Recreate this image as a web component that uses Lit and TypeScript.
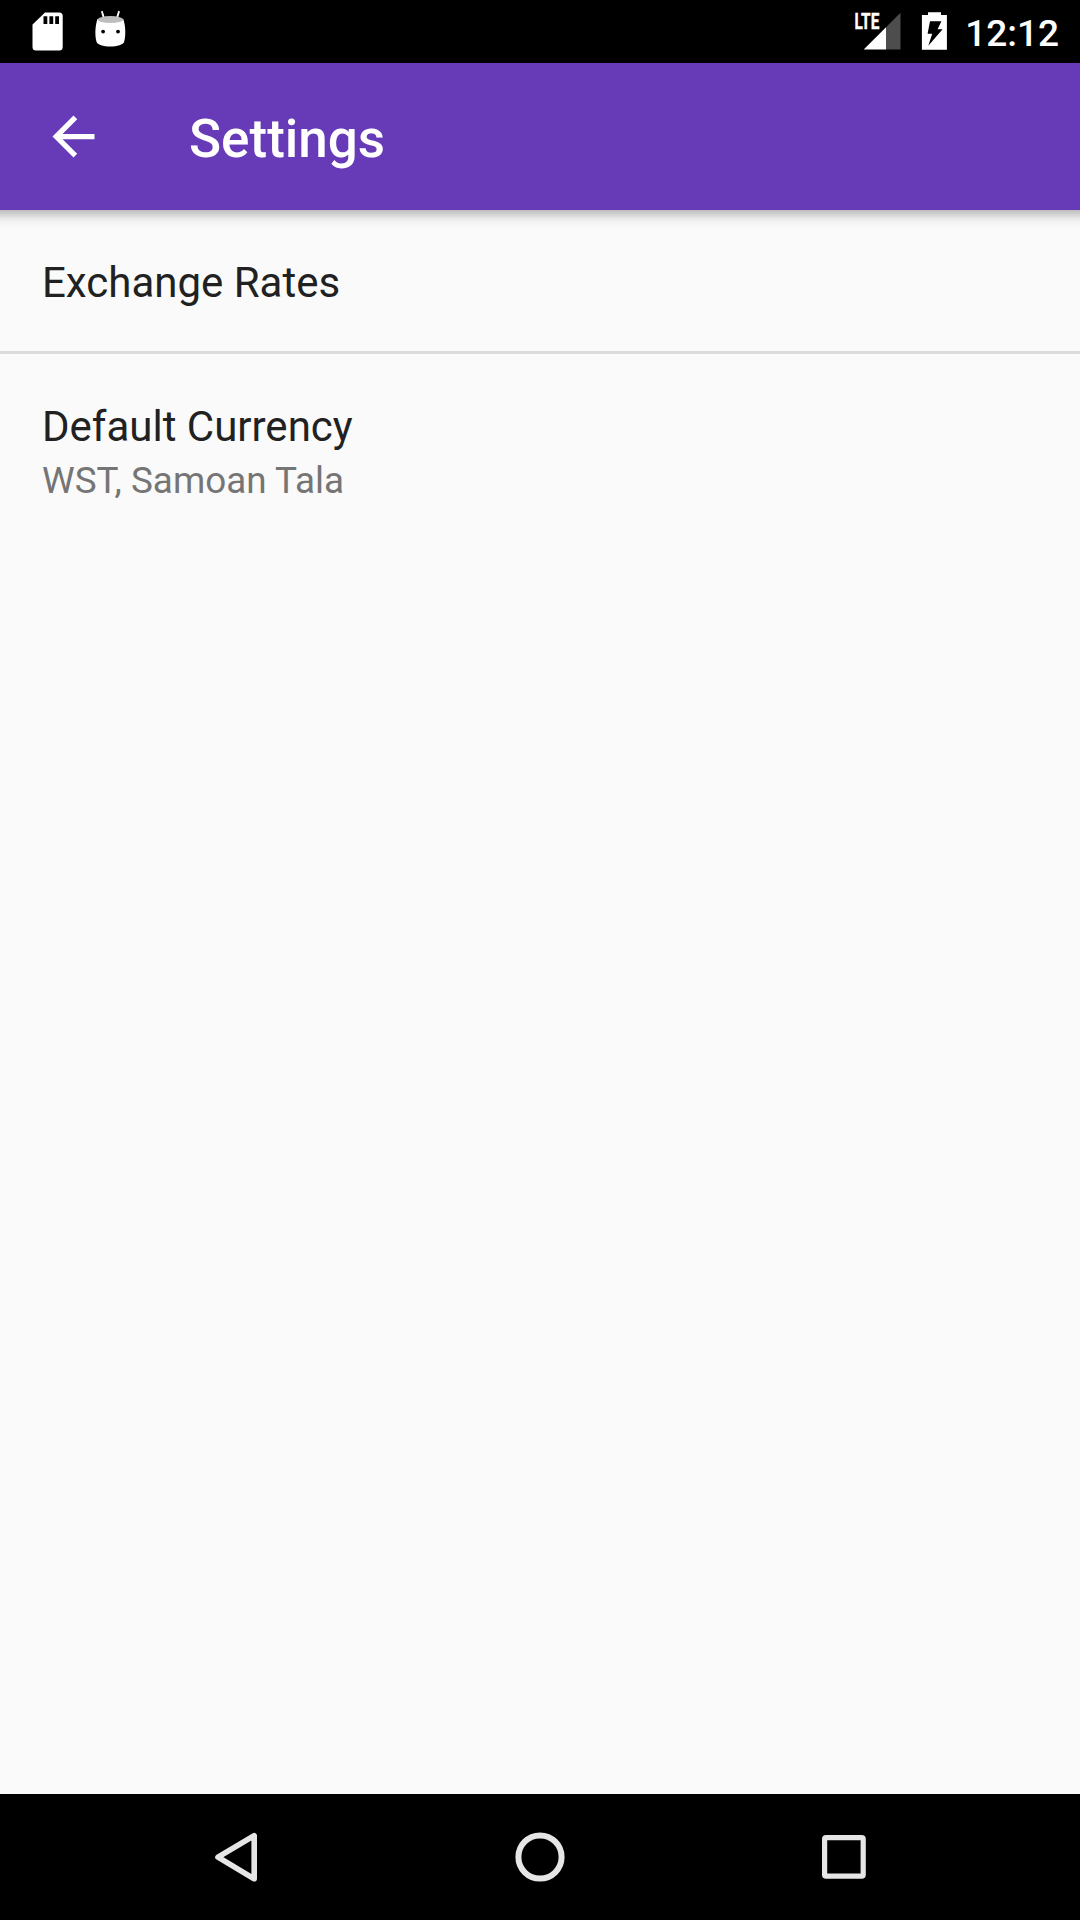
import { LitElement, html, svg, css } from "lit";
import { customElement, property } from "lit/decorators.js";

@customElement("status-bar")
class StatusBar extends LitElement {
  static styles = css`
    :host {
      display: flex;
      justify-content: space-between;
      height: 63px;
      flex: none;
      background: #000;
      color: #fff;
    }
    .group {
      display: flex;
      align-items: flex-start;
    }
    .left {
      padding-left: 26px;
    }
    .right {
      padding-right: 21px;
    }
    svg {
      display: block;
    }
    .clock {
      font: 500 37px/43px Roboto, sans-serif;
      padding-top: 12px;
      margin-left: 13px;
      white-space: nowrap;
    }
    .lte {
      font: 700 21.5px Roboto, sans-serif;
      stroke: #fff;
      stroke-width: 0.4px;
    }
  `;
  render() {
    return html`
      <div class="group left">
        <svg width="64" height="63" viewBox="26 0 64 63">
          <path fill="#fff" d="M45 12.5H59.2a3.5 3.5 0 0 1 3.5 3.5V47a3.5 3.5 0 0 1-3.5 3.5H36a3.5 3.5 0 0 1-3.5-3.5V24.5z" />
          <path d="M43.5 16.2h3.8v7.9h-3.8zM49.4 16.2h3.8v7.9h-3.8zM55.2 16.2h3.8v7.9h-3.8z" />
        </svg>
        <svg width="42" height="63" viewBox="90 0 42 63">
          <path fill="none" stroke="#fff" stroke-width="1.9" stroke-linecap="round" d="M102 11.8l2 6.7M118.9 11.8l-2 6.7" />
          <path fill="#fff" d="M97.5 19C95 26 94.8 36 96.6 42c.7 2.6 6.8 4.5 13.7 4.5s13-1.9 13.8-4.5c1.8-6 1.7-16-.9-23z" />
          <ellipse cx="110.4" cy="19.6" rx="12.9" ry="3.5" fill="#bdbdbd" />
          <circle cx="103.1" cy="31.6" r="1.9" />
          <circle cx="118" cy="31.6" r="1.9" />
        </svg>
      </div>
      <div class="group right">
        <svg width="54" height="63" viewBox="852 0 54 63">
          <path fill="#4d4d4d" d="M900.5 12.7V49.5H886V27.2z" />
          <path fill="#fff" d="M886 27.2V49.5H863.7z" />
          <text class="lte" x="854.5" y="29" fill="#fff" textLength="24.8" lengthAdjust="spacingAndGlyphs">LTE</text>
        </svg>
        <svg width="46" height="63" viewBox="906 0 46 63">
          <path fill="#fff" d="M928 15V12.3h13V15h5.9v34.8h-25V15z" />
          <path d="M930 21.3h11.4l-3.8 7.9h5L928.3 45.7l3.9-12h-4.6z" />
        </svg>
        <span class="clock">12:12</span>
      </div>
    `;
  }
}

@customElement("app-toolbar")
class AppToolbar extends LitElement {
  @property() heading = "";
  static styles = css`
    :host {
      display: flex;
      align-items: center;
      height: 147px;
      flex: none;
      box-sizing: border-box;
      padding-left: 42px;
      background: #673ab7;
      color: #fff;
    }
    .back {
      display: block;
      flex: none;
      fill: #fff;
    }
    .heading {
      margin: 0 0 0 84px;
      padding-top: 5px;
      font: 500 53px/62px Roboto, sans-serif;
    }
  `;
  render() {
    return html`
      <svg class="back" width="63" height="63" viewBox="0 0 24 24">
        <path d="M20 11H7.83l5.59-5.59L12 4l-8 8 8 8 1.41-1.41L7.83 13H20v-2z" />
      </svg>
      <h1 class="heading">${this.heading}</h1>
    `;
  }
}

@customElement("settings-item")
class SettingsItem extends LitElement {
  @property() label = "";
  @property() summary = "";
  static styles = css`
    :host {
      display: block;
      padding: 48px 42px 44px;
      font-family: Roboto, sans-serif;
    }
    .label {
      font-size: 42px;
      line-height: 49px;
      color: #212121;
    }
    .summary {
      margin-top: 8px;
      font-size: 36.85px;
      line-height: 43px;
      color: #757575;
    }
  `;
  render() {
    return html`
      <div class="label">${this.label}</div>
      ${this.summary ? html`<div class="summary">${this.summary}</div>` : null}
    `;
  }
}

@customElement("navigation-bar")
class NavigationBar extends LitElement {
  static styles = css`
    :host {
      display: flex;
      justify-content: center;
      gap: 204px;
      height: 126px;
      flex: none;
      background: #000;
    }
    svg {
      display: block;
      fill: none;
      stroke: #e6e6e6;
    }
  `;
  render() {
    const icons = [
      svg`<path stroke-width="5.6" stroke-linejoin="round" d="M68.2 41.6V84.8L32 63.2z" />`,
      svg`<circle cx="50" cy="63" r="21.6" stroke-width="6" />`,
      svg`<rect x="30.6" y="43.6" width="38.6" height="38.6" rx="1.5" stroke-width="5.2" />`,
    ];
    return icons.map((icon) => html`<svg width="100" height="126" viewBox="0 0 100 126">${icon}</svg>`);
  }
}

@customElement("app-root")
class AppRoot extends LitElement {
  static styles = css`
    :host {
      display: flex;
      flex-direction: column;
      height: 1920px;
      overflow: hidden;
      background: #fafafa;
    }
    .list {
      flex: 1;
      background: linear-gradient(#bdbdbd 0, #d0d0d0 4px, #e6e6e6 8px, #f3f3f3 12px, #fafafa 19px);
    }
    .divider {
      height: 3px;
      background: #dbdbdb;
    }
  `;
  render() {
    return html`
      <status-bar></status-bar>
      <app-toolbar heading="Settings"></app-toolbar>
      <main class="list">
        <settings-item label="Exchange Rates"></settings-item>
        <div class="divider"></div>
        <settings-item label="Default Currency" summary="WST, Samoan Tala"></settings-item>
      </main>
      <navigation-bar></navigation-bar>
    `;
  }
}
